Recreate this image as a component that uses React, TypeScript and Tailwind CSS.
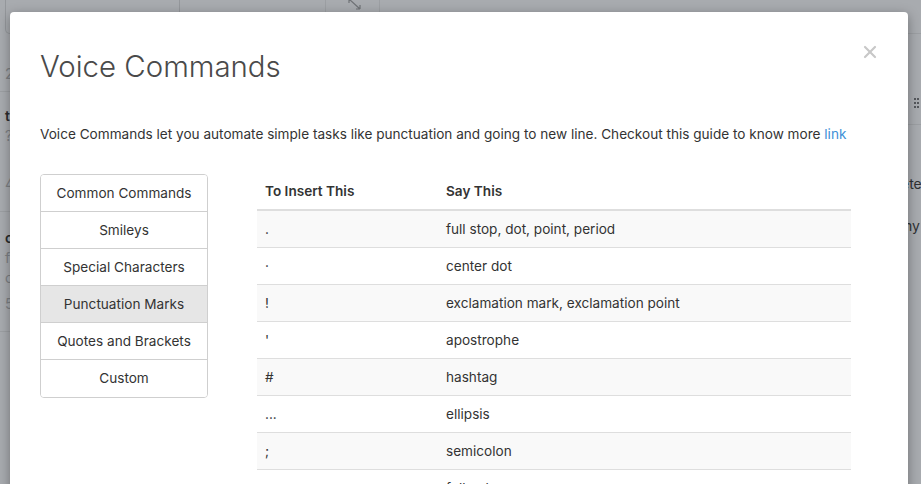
import { X } from "lucide-react";

const groups = [
  "Common Commands",
  "Smileys",
  "Special Characters",
  "Punctuation Marks",
  "Quotes and Brackets",
  "Custom",
];

const rows = [
  { insert: ".", say: "full stop, dot, point, period" },
  { insert: "·", say: "center dot" },
  { insert: "!", say: "exclamation mark, exclamation point" },
  { insert: "'", say: "apostrophe" },
  { insert: "#", say: "hashtag" },
  { insert: "...", say: "ellipsis" },
  { insert: ";", say: "semicolon" },
  { insert: ":", say: "full colon" },
];

function Backdrop() {
  return (
    <div className="flex flex-col h-full text-[14px]">
      {/* top toolbar of the page behind */}
      <div className="flex h-[34px] shrink-0">
        <div className="ml-[5px] w-[175px] border border-t-0 border-[#94979b] rounded-b-[5px]" />
        <div className="w-[146px] border-r border-[#9c9fa3]" />
        <div className="w-[54px] border-r border-[#9c9fa3] pl-[20px]">
          <svg width="20" height="14" viewBox="0 0 20 14" className="mt-[-2px]" fill="none" stroke="#6f7276" strokeWidth="1.2">
            <path d="M3 1 L14 11 M3 1 L3 5 M3 1 L7 1 M14 11 L14 7 M14 11 L10 11" />
          </svg>
        </div>
        <div className="flex-1" />
        <div className="w-[13px] border-b border-[#9c9fa3]" />
      </div>
      <div className="flex flex-1 justify-between">
        <div className="w-[40px] flex flex-col text-[#7d8084]">
          <div className="h-[58px] border-b border-[#9c9fa3] pl-[5px] pt-[30px] leading-[20px]">2</div>
          <div className="h-[120px] border-b border-[#9c9fa3] pl-[5px] pt-[14px] leading-[20px]">
            <div className="text-[#2a2c2e] font-semibold">t</div>
            <div>?</div>
            <div className="mt-[28px]">4</div>
          </div>
          <div className="h-[120px] border-b border-[#9c9fa3] pl-[5px] pt-[16px] leading-[20px]">
            <div className="text-[#2a2c2e] font-semibold">c</div>
            <div>f</div>
            <div>c</div>
            <div className="mt-[6px]">5</div>
          </div>
        </div>
        <div className="w-[13px] flex flex-col text-[#2f3134]">
          <div className="h-[91px] border-b border-[#9c9fa3] pt-[64px] pl-[6px]">
            <svg width="8" height="10" viewBox="0 0 8 10" fill="#55585c">
              <rect x="0" y="0" width="2" height="2" />
              <rect x="3" y="0" width="2" height="2" />
              <rect x="0" y="4" width="2" height="2" />
              <rect x="3" y="4" width="2" height="2" />
              <rect x="0" y="8" width="2" height="2" />
              <rect x="3" y="8" width="2" height="2" />
            </svg>
          </div>
          <div className="mt-[49px] ml-[-7px] leading-[20px]">ete</div>
          <div className="mt-[22px] ml-[-8px] leading-[20px]">my</div>
        </div>
      </div>
    </div>
  );
}

export default function App() {
  return (
    <div
      className="relative w-[921px] h-[484px] overflow-hidden bg-[#a8abaf]"
      style={{ fontFamily: "Inter, 'Noto Sans', sans-serif" }}
    >
      <Backdrop />

      {/* modal */}
      <div className="absolute left-[10px] top-[12px] w-[898px] h-[520px] bg-white rounded-[4px] shadow-[0_3px_12px_rgba(0,0,0,0.35)] px-[30px]">
        <button className="absolute right-[28px] top-[30px] text-[#c8c8c8]">
          <X size={20} strokeWidth={2.6} />
        </button>

        <h1 className="pt-[38px] text-[29.4px] leading-[33px] font-light text-[#4a4a4a]">
          Voice Commands
        </h1>

        <p className="mt-[41px] text-[13.6px] leading-[20px] text-[#333]">
          Voice Commands let you automate simple tasks like punctuation and going to new line. Checkout this guide to know more{" "}
          <a className="text-[#3d8fd6]">link</a>
        </p>

        <div className="flex mt-[30px]">
          <div className="w-[168px] shrink-0 self-start border border-[#cfcfcf] rounded-[4px] overflow-hidden divide-y divide-[#cfcfcf]">
            {groups.map((g) => (
              <div
                key={g}
                className={`h-[37px] flex items-center justify-center text-[13.6px] text-[#333] ${
                  g === "Punctuation Marks" ? "bg-[#e6e6e6]" : "bg-white"
                }`}
              >
                {g}
              </div>
            ))}
          </div>

          <div className="ml-[49px] w-[594px]">
            <div className="flex h-[37px] items-center border-b-2 border-[#dedede] text-[13.6px] font-semibold text-[#333]">
              <div className="w-[181px] shrink-0 px-[8px]">To Insert This</div>
              <div className="px-[8px]">Say This</div>
            </div>
            {rows.map((r, i) => (
              <div
                key={r.say}
                className={`flex h-[37px] items-center border-b border-[#dedede] text-[13.6px] text-[#333] ${
                  i % 2 === 0 ? "bg-[#f9f9f9]" : "bg-white"
                }`}
              >
                <div className="w-[181px] shrink-0 px-[8px]">{r.insert}</div>
                <div className="px-[8px]">{r.say}</div>
              </div>
            ))}
          </div>
        </div>
      </div>
    </div>
  );
}
